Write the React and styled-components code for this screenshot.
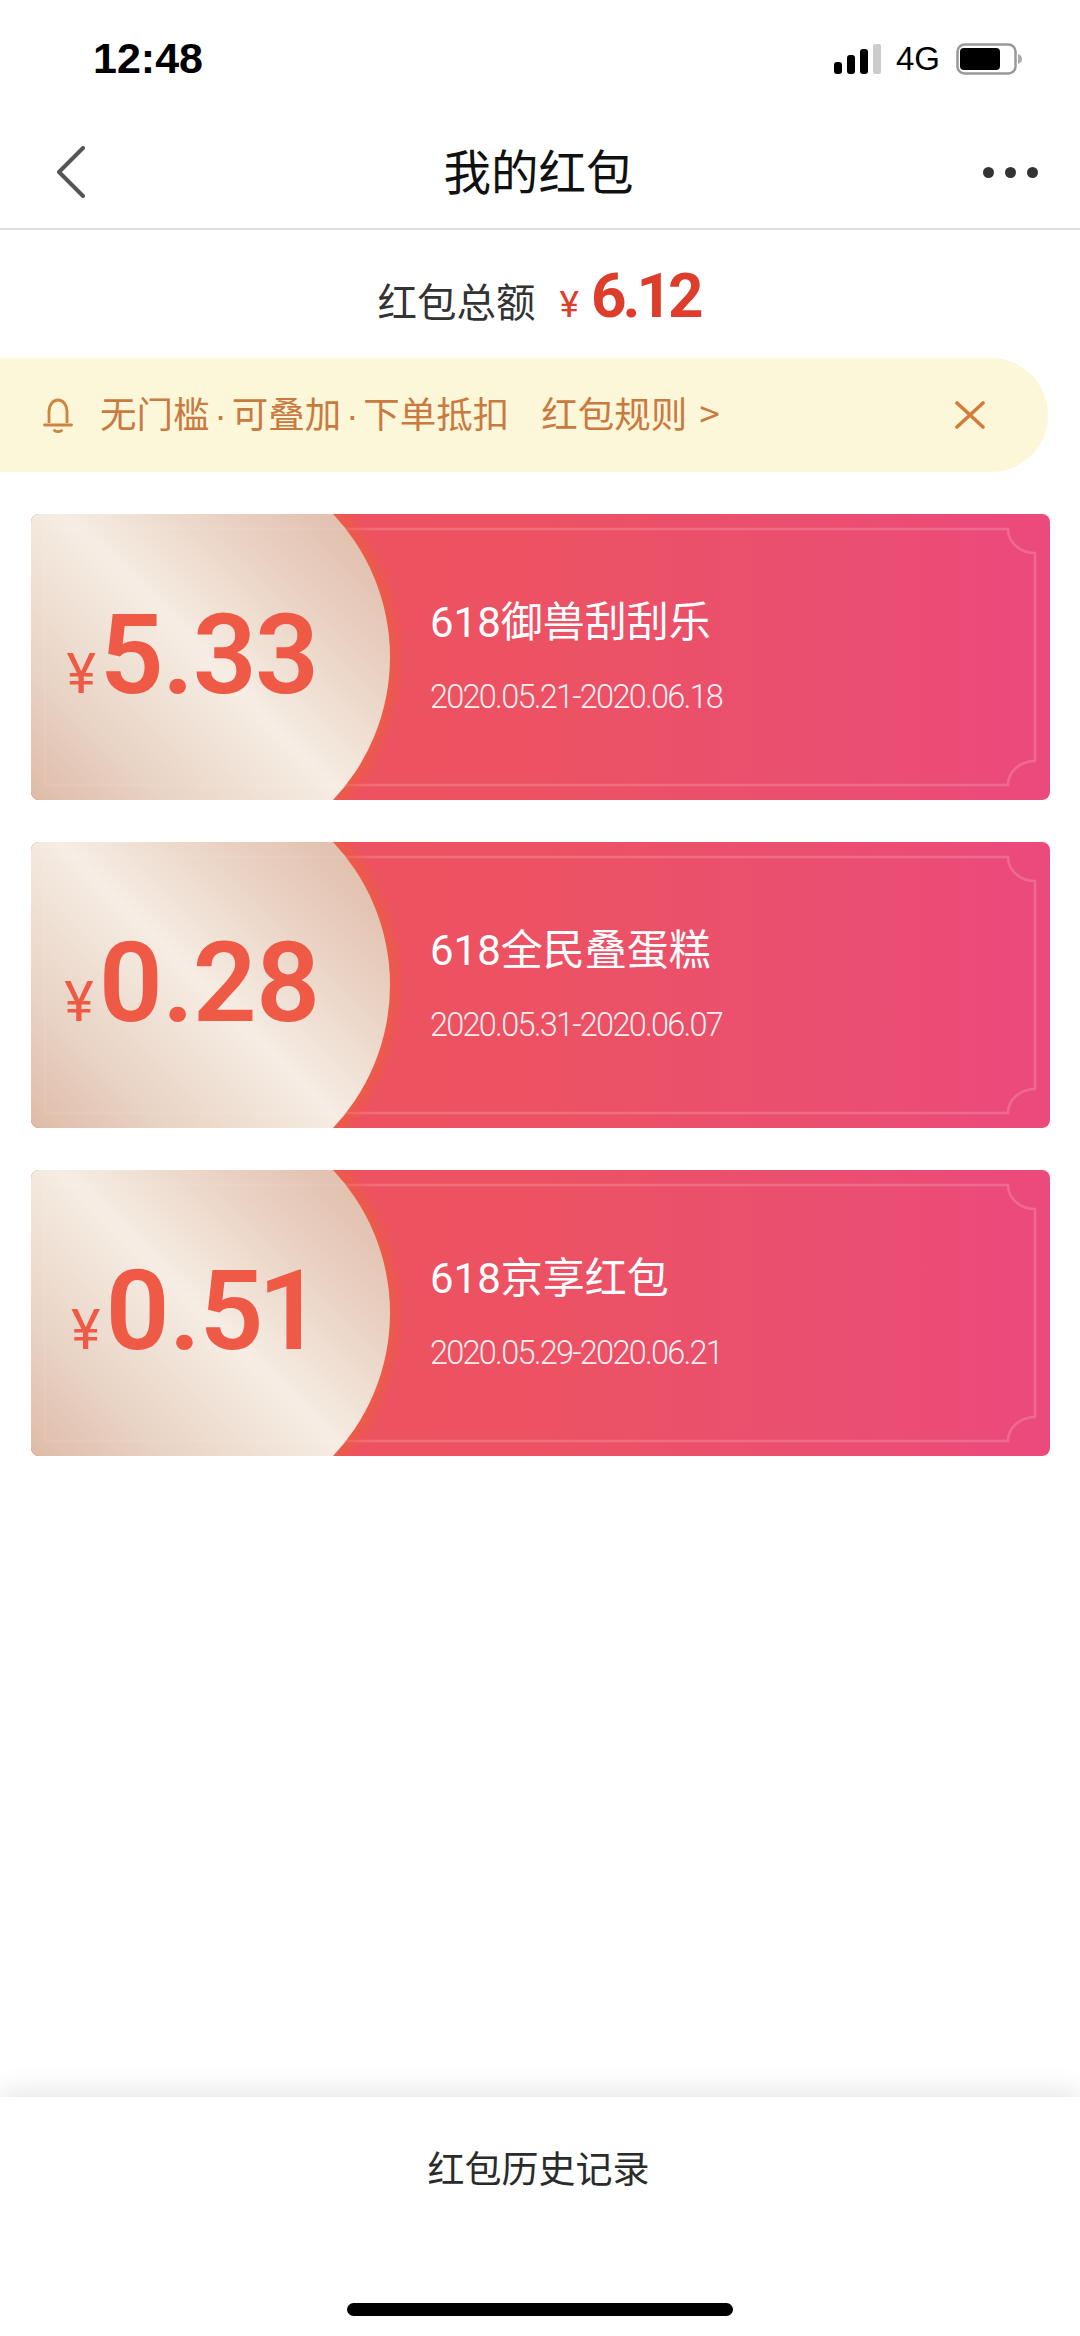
import React from 'react'
import styled, { createGlobalStyle } from 'styled-components'

const CJK = `"Noto Sans CJK SC", "Liberation Sans", sans-serif`
const NUM = `Roboto, "Liberation Sans", "Noto Sans CJK SC", sans-serif`

const GlobalStyle = createGlobalStyle`
  html, body {
    margin: 0;
    padding: 0;
    background: #fff;
  }
`

const Page = styled.div`
  display: flex;
  flex-direction: column;
  width: 1080px;
  height: 2336px;
  overflow: hidden;
  background: #fff;
  font-family: ${CJK};
`

const StatusBar = styled.div`
  display: flex;
  align-items: center;
  justify-content: space-between;
  height: 116px;
  padding: 2px 57px 0 93px;
  box-sizing: border-box;
`
const Time = styled.span`
  margin-top: -2px;
  font-family: "Liberation Sans", sans-serif;
  font-weight: 700;
  font-size: 43px;
  color: #000;
`
const StatusIcons = styled.div`
  display: flex;
  align-items: center;
`
const Network = styled.span`
  font-family: "Liberation Sans", sans-serif;
  font-size: 33px;
  margin: 0 16px 0 15px;
  color: #000;
`

const NavBar = styled.div`
  display: flex;
  align-items: center;
  justify-content: space-between;
  height: 114px;
  padding: 0 42px 0 56px;
  box-sizing: border-box;
  border-bottom: 2px solid #dedede;
`
const NavTitle = styled.h1`
  margin: 0 0 5px 8px;
  font-size: 47.5px;
  font-weight: 400;
  line-height: 1;
  color: #111;
`
const Dots = styled.div`
  display: flex;
  gap: 11px;
`
const Dot = styled.i`
  width: 11px;
  height: 11px;
  border-radius: 50%;
  background: #333;
`

const Total = styled.div`
  display: flex;
  align-items: baseline;
  justify-content: center;
  height: 128px;
  padding-right: 3px;
  box-sizing: border-box;
  line-height: 132px;
  color: #333;
  font-size: 39.5px;
`
const TotalYen = styled.span`
  margin-left: 24px;
  font-family: ${NUM};
  font-size: 37px;
  color: #de3d2c;
`
const TotalAmount = styled.span`
  margin-left: 12px;
  font-family: ${NUM};
  font-weight: 700;
  font-size: 62px;
  letter-spacing: -4px;
  color: #de3d2c;
`

const Banner = styled.div`
  display: flex;
  align-items: center;
  width: 1048px;
  height: 114px;
  padding: 0 63px 0 43px;
  box-sizing: border-box;
  border-radius: 0 57px 57px 0;
  background: #fdf7da;
  color: #c97a40;
  font-size: 36.5px;
`
const BannerText = styled.span`
  margin: -5px 0 0 27px;
`
const Sep = styled.span`
  font-family: "Liberation Sans", sans-serif;
  margin: 0 5px;
`
const Rule = styled.span`
  margin: -5px 0 0 32px;
  flex: 1;
  word-spacing: 4px;
`

const CardList = styled.div`
  display: flex;
  flex-direction: column;
  gap: 42px;
  flex: 1;
  padding: 42px 30px 0 31px;
`
const Card = styled.div`
  position: relative;
  display: flex;
  height: 286px;
  border-radius: 8px;
  overflow: hidden;
  color: #fff;
  background:
    radial-gradient(circle 224px at 151px 143px, #ec5b48 92.8%, rgba(236, 91, 72, 0) 100%),
    linear-gradient(90deg, #ee5358 0%, #ec5263 50%, #eb4f6f 75%, #eb4a7c 100%);
`
const Plate = styled.div`
  display: flex;
  align-items: baseline;
  justify-content: center;
  flex: none;
  width: 360px;
  height: 286px;
  padding-right: 38px;
  box-sizing: border-box;
  margin-right: 39px;
  line-height: 282px;
  clip-path: circle(208px at 151px 143px);
  background: linear-gradient(
    45deg,
    #dfbba8 0%,
    #e8d2c3 20%,
    #f6ede4 49%,
    #ebd5c7 70%,
    #e3c3b2 88%,
    #e0bcaa 100%
  );
  color: #ee5a45;
  font-family: ${NUM};
`
const Yen = styled.span`
  font-size: 56px;
  font-weight: 400;
  margin-right: 4px;
`
const Amount = styled.span`
  font-size: 112px;
  font-weight: 600;
  letter-spacing: -1.5px;
  font-variant-numeric: proportional-nums;
`
const Info = styled.div`
  display: flex;
  flex-direction: column;
  padding-top: 85px;
`
const CardTitle = styled.div`
  font-family: ${NUM};
  font-size: 42px;
  line-height: 48px;
`
const CardDate = styled.div`
  margin-top: 32px;
  font-family: ${NUM};
  font-weight: 300;
  font-size: 32.5px;
  line-height: 36px;
  letter-spacing: -1.75px;
  color: rgba(255, 255, 255, 0.92);
`
const CardFrame = styled.svg`
  position: absolute;
  inset: 0;
  pointer-events: none;
`

const Footer = styled.div`
  display: flex;
  flex-direction: column;
  align-items: center;
  height: 239px;
  padding-top: 43px;
  box-sizing: border-box;
  background: #fff;
  box-shadow: 0 -6px 26px rgba(0, 0, 0, 0.1);
`
const History = styled.div`
  margin-right: 3px;
  font-size: 37px;
  line-height: 54px;
  color: #2b2b2b;
`
const HomeBar = styled.div`
  width: 386px;
  height: 13px;
  margin-top: 109px;
  border-radius: 7px;
  background: #000;
`

const coupons = [
  { amount: '5.33', title: '618御兽刮刮乐', date: '2020.05.21-2020.06.18' },
  { amount: '0.28', title: '618全民叠蛋糕', date: '2020.05.31-2020.06.07' },
  { amount: '0.51', title: '618京享红包', date: '2020.05.29-2020.06.21' },
]

const Signal = () => (
  <svg width="47" height="30" viewBox="0 0 47 30">
    <rect x="0" y="18" width="8" height="12" rx="3" fill="#000" />
    <rect x="13" y="11" width="8" height="19" rx="3" fill="#000" />
    <rect x="26" y="5" width="8" height="25" rx="3" fill="#000" />
    <rect x="39" y="0" width="8" height="30" rx="2" fill="#ccc" />
  </svg>
)

const Battery = () => (
  <svg width="67" height="32" viewBox="0 0 67 32">
    <rect x="1.5" y="1.5" width="58" height="29" rx="7" fill="none" stroke="#999" strokeWidth="2.5" />
    <rect x="4" y="5" width="40" height="22" rx="4" fill="#000" />
    <path d="M62 11 C65 12 66 14 66 16 C66 18 65 20 62 21 Z" fill="#aaa" />
  </svg>
)

const BackIcon = () => (
  <svg width="30" height="52" viewBox="0 0 30 52">
    <path d="M27 2 L3 26 L27 50" fill="none" stroke="#555" strokeWidth="4" strokeLinecap="round" strokeLinejoin="round" />
  </svg>
)

const BellIcon = () => (
  <svg width="30" height="36" viewBox="0 0 30 36" fill="none" stroke="#d0823f" strokeWidth="2.8">
    <path d="M6 26 V14 C6 8 10 3 15 3 C20 3 24 8 24 14 V26" />
    <path d="M1.5 28 H28.5" strokeLinecap="round" />
    <path d="M11.5 33.5 C13 35 17 35 18.5 33.5" strokeLinecap="round" />
  </svg>
)

const CloseIcon = () => (
  <svg width="30" height="28" viewBox="0 0 30 28">
    <path d="M2 2 L28 26 M28 2 L2 26" fill="none" stroke="#d27c3b" strokeWidth="3.6" strokeLinecap="round" />
  </svg>
)

export default function App() {
  return (
    <Page>
      <GlobalStyle />
      <StatusBar>
        <Time>12:48</Time>
        <StatusIcons>
          <Signal />
          <Network>4G</Network>
          <Battery />
        </StatusIcons>
      </StatusBar>

      <NavBar>
        <BackIcon />
        <NavTitle>我的红包</NavTitle>
        <Dots>
          <Dot />
          <Dot />
          <Dot />
        </Dots>
      </NavBar>

      <Total>
        红包总额
        <TotalYen>¥</TotalYen>
        <TotalAmount>6.12</TotalAmount>
      </Total>

      <Banner>
        <BellIcon />
        <BannerText>
          无门槛<Sep>·</Sep>可叠加<Sep>·</Sep>下单抵扣
        </BannerText>
        <Rule>红包规则 &gt;</Rule>
        <CloseIcon />
      </Banner>

      <CardList>
        {coupons.map(coupon => (
          <Card key={coupon.title}>
            <Plate>
              <Yen>¥</Yen>
              <Amount>{coupon.amount}</Amount>
            </Plate>
            <Info>
              <CardTitle>{coupon.title}</CardTitle>
              <CardDate>{coupon.date}</CardDate>
            </Info>
            <CardFrame width="1019" height="286" viewBox="0 0 1019 286">
              <defs>
                <linearGradient id="frameStroke" gradientUnits="userSpaceOnUse" x1="0" y1="0" x2="1019" y2="0">
                  <stop offset="0.3" stopColor="#fff" stopOpacity="0.06" />
                  <stop offset="0.34" stopColor="#fff" stopOpacity="0.17" />
                </linearGradient>
              </defs>
              <path
                d="M14 15 H977 A27 24 0 0 0 1004 39 V247 A27 24 0 0 0 977 271 H14 Z"
                fill="none"
                stroke="url(#frameStroke)"
                strokeWidth="2.5"
              />
            </CardFrame>
          </Card>
        ))}
      </CardList>

      <Footer>
        <History>红包历史记录</History>
        <HomeBar />
      </Footer>
    </Page>
  )
}
